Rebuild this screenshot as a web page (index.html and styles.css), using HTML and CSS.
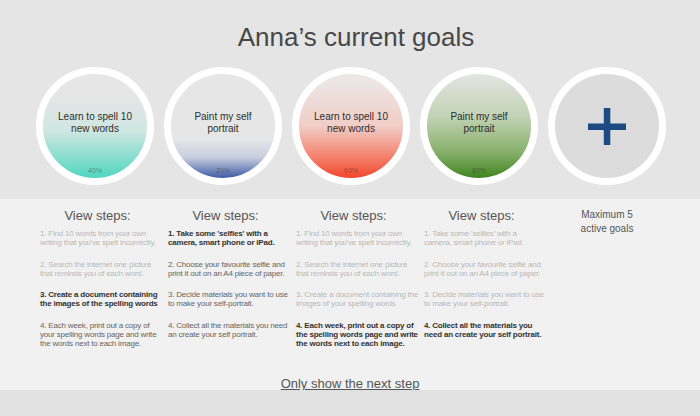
FILE: index.html
```html
<!DOCTYPE html>
<html lang="en">
<head>
<meta charset="utf-8">
<title>Anna's current goals</title>
<link rel="stylesheet" href="styles.css">
</head>
<body>
<div class="page">
  <section class="top">
    <h1 class="title">Anna’s current goals</h1>
    <div class="goals">
      <div class="goal-cell">
        <div class="goal goal-teal">
          <div class="goal-label">Learn to spell 10<br>new words</div>
          <div class="goal-pct">40%</div>
        </div>
      </div>
      <div class="goal-cell">
        <div class="goal goal-blue">
          <div class="goal-label">Paint my self<br>portrait</div>
          <div class="goal-pct">20%</div>
        </div>
      </div>
      <div class="goal-cell">
        <div class="goal goal-red">
          <div class="goal-label">Learn to spell 10<br>new words</div>
          <div class="goal-pct">60%</div>
        </div>
      </div>
      <div class="goal-cell">
        <div class="goal goal-green">
          <div class="goal-label">Paint my self<br>portrait</div>
          <div class="goal-pct">80%</div>
        </div>
      </div>
      <div class="goal-cell">
        <div class="goal goal-add">
          <svg class="plus" width="38" height="37" viewBox="0 0 38 37" aria-hidden="true">
            <rect x="0" y="15.5" width="38" height="6.5" fill="#1d4a83"/>
            <rect x="15.8" y="0" width="6.5" height="37" fill="#1d4a83"/>
          </svg>
        </div>
      </div>
    </div>
  </section>

  <section class="steps">
    <div class="columns">
      <div class="col">
        <h2 class="col-title">View steps:</h2>
        <p class="step done">1. Find 10 words from your own writing that you've spelt incorrectly.</p>
        <p class="step done">2. Search the internet one picture that reminds you of each word.</p>
        <p class="step current">3. Create a document containing the images of the spelling words</p>
        <p class="step">4. Each week, print out a copy of your spelling words page and write the words next to each image.</p>
      </div>
      <div class="col">
        <h2 class="col-title">View steps:</h2>
        <p class="step current">1. Take some 'selfies' with a<br>camera, smart phone or iPad.</p>
        <p class="step">2. Choose your favourite selfie and print it out on an A4 piece of paper.</p>
        <p class="step">3. Decide materials you want to use to make your self-portrait.</p>
        <p class="step">4. Collect all the materials you need an create your self portrait.</p>
      </div>
      <div class="col">
        <h2 class="col-title">View steps:</h2>
        <p class="step done">1. Find 10 words from your own writing that you've spelt incorrectly.</p>
        <p class="step done">2. Search the internet one picture that reminds you of each word.</p>
        <p class="step done">3. Create a document containing the images of your spelling words</p>
        <p class="step current">4. Each week, print out a copy of the spelling words page and write the words next to each image.</p>
      </div>
      <div class="col">
        <h2 class="col-title">View steps:</h2>
        <p class="step done">1. Take some 'selfies' with a<br>camera, smart phone or iPad.</p>
        <p class="step done">2. Choose your favourite selfie and print it out on an A4 piece of paper.</p>
        <p class="step done">3. Decide materials you want to use to make your self-portrait.</p>
        <p class="step current">4. Collect all the materials you need an create your self portrait.</p>
      </div>
      <div class="col col-note">
        <p class="note">Maximum 5<br>active goals</p>
      </div>
    </div>
    <a class="next-link" href="#">Only show the next step</a>
  </section>

  <section class="bottom"></section>
</div>
</body>
</html>
```

FILE: styles.css
```css
* {
  box-sizing: border-box;
}

html, body {
  margin: 0;
  padding: 0;
}

body {
  font-family: "Liberation Sans", Arial, sans-serif;
  background: #e1e1e1;
  width: 700px;
  height: 416px;
  overflow: hidden;
}

.page {
  display: flex;
  flex-direction: column;
  height: 416px;
}

.top {
  background: #e5e5e5;
  height: 199px;
  padding-top: 22px;
}

.title {
  margin: 0;
  font-weight: normal;
  font-size: 26px;
  line-height: 30px;
  color: #484848;
  text-align: center;
  padding-left: 12px;
}

.goals {
  display: grid;
  grid-template-columns: repeat(5, 128px);
  justify-content: center;
  margin-top: 15px;
  padding-left: 2px;
}

.goal-cell {
  display: flex;
  justify-content: center;
}

.goal {
  width: 118px;
  height: 118px;
  border-radius: 50%;
  border: 7px solid #ffffff;
  background: #e6e6e6;
  display: flex;
  flex-direction: column;
  align-items: center;
  overflow: hidden;
}

.goal-label {
  margin-top: 37px;
  font-size: 10px;
  line-height: 12px;
  color: #2e2e2e;
  text-align: center;
}

.goal-pct {
  margin-top: auto;
  padding-bottom: 3px;
  font-size: 7px;
  line-height: 9px;
  color: rgba(40, 40, 40, 0.45);
}

.goal-teal {
  background: linear-gradient(to bottom, #e6e6e6 22%, #cfe6e1 55%, #4fd7c0 100%);
}

.goal-blue {
  background: linear-gradient(to bottom, #e6e6e6 62%, #c9cfe0 80%, #3f5ba4 100%);
}

.goal-red {
  background: linear-gradient(to bottom, #ece6e6 8%, #f1cdc7 50%, #f47b65 82%, #f2462e 100%);
}

.goal-green {
  background: linear-gradient(to bottom, #e4e4e2 0%, #c3d3b6 40%, #88b06c 75%, #3f8520 100%);
}

.goal-add {
  background: #dcdcdc;
  justify-content: center;
}

.steps {
  background: #f1f1f1;
  height: 191px;
  display: flex;
  flex-direction: column;
  padding-top: 9px;
}

.columns {
  display: grid;
  grid-template-columns: repeat(5, 123px);
  column-gap: 5px;
  padding-left: 40px;
}

.col-title {
  margin: 0 0 5px 0;
  font-weight: normal;
  font-size: 13px;
  line-height: 16px;
  color: #555555;
  text-align: center;
  padding-right: 8px;
}

.step {
  margin: 0 0 12.5px 0;
  font-size: 8px;
  letter-spacing: -0.2px;
  line-height: 9px;
  color: #666666;
}

.step.done {
  color: #b9b9b9;
}

.step.current {
  color: #333333;
  font-weight: bold;
}

.col-note {
  padding: 0 13px 0 0;
}

.note {
  margin: 0;
  font-size: 10px;
  line-height: 14px;
  color: #555555;
  text-align: center;
}

.next-link {
  margin-top: auto;
  margin-bottom: -1px;
  align-self: center;
  font-size: 13px;
  line-height: 14px;
  color: #555555;
  text-decoration: underline;
}

.bottom {
  flex: 1;
  background: #e1e1e1;
}
```
